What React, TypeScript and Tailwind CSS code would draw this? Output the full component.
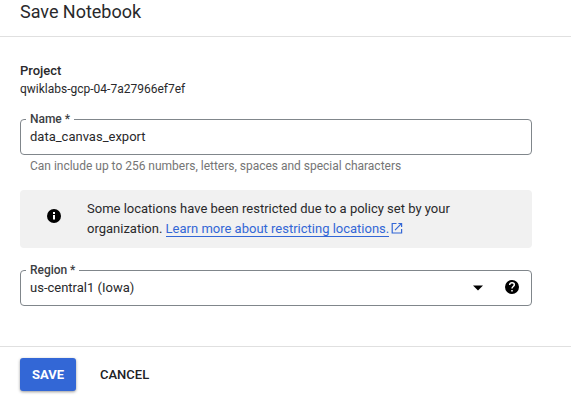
import type { ReactNode } from "react";

function Field({ label, children }: { label: string; children: ReactNode }) {
  return (
    <div className="relative flex h-9 w-[512px] shrink-0 items-center rounded border border-[#80868b] px-[9px]">
      <span className="absolute -top-[9px] left-[5px] bg-white px-1 text-[12px] leading-4 font-medium tracking-[-0.03px] text-[#3c4043]">{label}</span>
      {children}
    </div>
  );
}

export default function App() {
  return (
    <main className="flex h-[413px] w-[571px] flex-col overflow-hidden bg-white font-[Roboto,sans-serif] text-[13px] leading-5 text-[#29292b]">
      <header className="h-[37px] shrink-0 border-b border-[#e0e0e0] px-5">
        <h1 className="text-[18px] leading-6 tracking-[-0.02px]">Save Notebook</h1>
      </header>
      <section className="flex h-[310px] shrink-0 flex-col border-b border-[#e0e0e0] px-5 pt-6">
        <p className="h-[18px] font-medium">Project</p>
        <p className="text-[12px] leading-5">qwiklabs-gcp-04-7a27966ef7ef</p>
        <div className="mt-5">
          <Field label="Name *"><span>data_canvas_export</span></Field>
        </div>
        <p className="mt-px pl-[10px] text-[12px] tracking-[-0.01px] text-[#757575]">Can include up to 256 numbers, letters, spaces and special characters</p>
        <div className="mt-[14px] flex h-[58px] w-[512px] shrink-0 items-start rounded bg-[#f1f1f1] pt-[9px]">
          <svg className="mt-[9px] ml-[26px] h-4 w-4 shrink-0" viewBox="0 0 16 16">
            <circle cx="8" cy="8" r="7" fill="#000" />
            <path d="M7 7h2v4.5H7zM7 4h2v2H7z" fill="#fff" />
          </svg>
          <p className="ml-[25px]">
            Some locations have been restricted due to a policy set by your
            <br />
            organization.{" "}
            <a className="inline-block h-[18px] border-b border-[#3367d6] text-[#3367d6]">Learn more about restricting locations.</a>
            <svg className="ml-[2px] inline-block h-[13px] w-[13px] align-[-2px]" viewBox="0 0 13 13" fill="none" stroke="#3367d6" strokeWidth="1.2">
              <path d="M5.5 1.5H1.2v9.5h9.4V7M7.4 1.5h3.2V5M10.4 1.7 4 8.2" />
            </svg>
          </p>
        </div>
        <div className="mt-[22px]">
          <Field label="Region *">
            <span className="flex-1">us-central1 (Iowa)</span>
            <svg className="mr-[20px] h-[6px] w-[10px]" viewBox="0 0 10 6"><path d="M0 .5h10L5 5.5z" fill="#000" /></svg>
            <svg className="mr-[1px] mb-[2px] h-[18px] w-[18px]" viewBox="0 0 24 24">
              <path d="M12 2.67A9.33 9.33 0 1 0 12 21.33A9.33 9.33 0 1 0 12 2.67z" />
              <path d="M8.9 9.3c0-1.9 1.3-3 3.1-3s3.1 1.1 3.1 2.8c0 2.2-3.1 2.4-3.1 4.8M12 15.9v2.2" fill="none" stroke="#fff" strokeWidth="2" />
            </svg>
          </Field>
        </div>
      </section>
      <footer className="flex items-start px-5 pt-[11px]">
        <button className="h-[33px] w-14 rounded-[3px] bg-[#3367d6] font-bold tracking-[-0.05px] text-white shadow-[0_1px_3px_rgba(0,0,0,0.4)]">SAVE</button>
        <button className="ml-6 h-[33px] font-medium text-[#202124]">CANCEL</button>
      </footer>
    </main>
  );
}
